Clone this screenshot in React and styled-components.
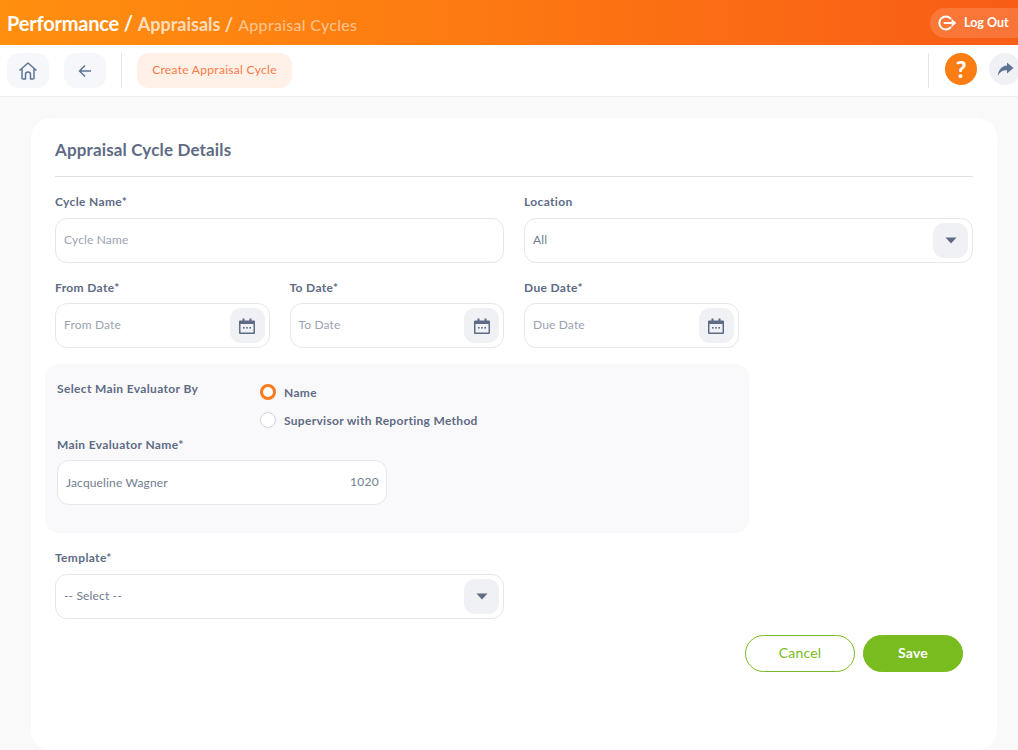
import React from 'react'
import styled, { createGlobalStyle } from 'styled-components'

const Global = createGlobalStyle`
html, body { margin: 0; padding: 0; height: 750px; overflow: hidden; background: #f9f9f9; }
* { box-sizing: border-box; }
body { font-family: 'Lato', 'Open Sans', sans-serif; color: #5e6b85; }
`

const Page = styled.div`
width: 1018px;
height: 750px;
overflow: hidden;
display: flex;
flex-direction: column;
`

const Header = styled.header`
height: 45px;
flex: none;
display: flex;
align-items: center;
justify-content: space-between;
padding-left: 7px;
background: linear-gradient(90deg, #ff8f0f 0%, #fd7a12 45%, #f85c16 100%);
`

const Crumbs = styled.div`
display: flex;
align-items: baseline;
font-weight: 700;
white-space: nowrap;
`

const Crumb = styled.span`
font-size: ${p => p.$size}px;
font-weight: ${p => p.$weight || 700};
letter-spacing: ${p => p.$track || 0}px;
color: rgba(255, 255, 255, ${p => p.$alpha});
margin-right: ${p => p.$gap}px;
`

const LogOut = styled.button`
width: 88px;
height: 30px;
border: none;
border-radius: 15px 0 0 15px;
background: rgba(255, 255, 255, 0.15);
color: #fff;
font: 700 12.5px 'Lato', sans-serif;
display: flex;
align-items: center;
gap: 7px;
padding: 0 0 0 7px;
white-space: nowrap;
`

const Toolbar = styled.div`
height: 52px;
flex: none;
background: #fff;
border-bottom: 1px solid #eeeef0;
display: flex;
align-items: flex-start;
padding: 8px 0 0 7px;
overflow: hidden;
`

const ToolButton = styled.button`
width: 42px;
height: 35px;
border: none;
border-radius: 12px;
background: #f5f7fa;
margin-right: 15px;
padding: 0;
display: flex;
align-items: center;
justify-content: center;
color: #5e7596;
`

const Divider = styled.div`
width: 1px;
height: 35px;
background: #e6e6ea;
margin-right: ${p => p.$gap}px;
`

const CreateTab = styled.div`
width: 155px;
height: 35px;
border-radius: 12px;
background: #fff0e8;
color: #fb7a45;
font-size: 12px;
letter-spacing: 0.3px;
padding-bottom: 2px;
display: flex;
align-items: center;
justify-content: center;
`

const RightTools = styled.div`
margin-left: auto;
display: flex;
margin-right: -3px;
`

const Circle = styled.div`
width: 32px;
height: 32px;
border-radius: 50%;
flex: none;
display: flex;
align-items: center;
justify-content: center;
background: ${p => p.$bg};
color: #fff;
font-size: 23px;
font-weight: 900;
margin-right: ${p => p.$gap || 0}px;
`

const Main = styled.main`
flex: 1;
padding: 21px 21px 0 31px;
`

const Card = styled.section`
background: #fff;
border-radius: 20px;
height: 632px;
padding: 20px 24px;
`

const Title = styled.h2`
margin: 0;
height: 39px;
padding-top: 1px;
border-bottom: 1px solid #dfe0e6;
font-size: 17px;
font-weight: 700;
letter-spacing: 0.15px;
line-height: 22px;
color: #5e6b85;
`

const Grid = styled.div`
display: grid;
grid-template-columns: repeat(4, 1fr);
column-gap: 20px;
margin-top: ${p => p.$top || 0}px;
`

const Field = styled.div`
grid-column: span ${p => p.$span || 1};
margin-top: ${p => p.$top || 0}px;
`

const Label = styled.div`
font-size: 12px;
font-weight: 700;
letter-spacing: 0.35px;
line-height: 16px;
height: 16px;
margin-bottom: ${p => p.$gap ?? 8}px;
color: #5e6b85;
`

const Box = styled.div`
height: 45px;
border: 1px solid #e6e6ec;
border-radius: 12px;
background: #fff;
display: flex;
align-items: center;
justify-content: space-between;
padding: 0 4px 2px 8px;
font-size: 12px;
letter-spacing: 0.15px;
color: ${p => (p.$filled ? '#727d91' : '#9aa3b2')};
`

const AddOn = styled.span`
width: 35px;
height: 35px;
margin-top: 2px;
border-radius: 11px;
background: #f0f1f5;
display: flex;
align-items: center;
justify-content: center;
color: #5e6b85;
`

const Panel = styled.div`
width: 704px;
height: 169px;
margin: 16px 0 0 -10px;
padding: 17px 12px 0;
background: #f9f9fb;
border-radius: 14px;
`

const PanelTop = styled.div`
display: flex;
height: 56px;
`

const PanelLabel = styled.div`
width: 203px;
font-size: 12px;
font-weight: 700;
letter-spacing: 0.35px;
line-height: 16px;
color: #5e6b85;
`

const Radios = styled.div`
display: flex;
flex-direction: column;
gap: 12px;
padding-top: 3px;
`

const RadioRow = styled.div`
display: flex;
align-items: center;
gap: 8px;
height: 16px;
font-size: 12px;
font-weight: 700;
letter-spacing: 0.3px;
color: #5e6b85;
`

const Radio = styled.span`
width: 16px;
height: 16px;
border-radius: 50%;
background: #fff;
border: ${p => (p.$on ? '3.5px solid #fb7a1c' : '1px solid #cfd2de')};
`

const NameBox = styled(Box)`
width: 330px;
padding: 0 7px 0 8px;
`

const Code = styled.span`
font-size: 12px;
letter-spacing: 0.3px;
padding-bottom: 2px;
`

const Actions = styled.div`
display: flex;
justify-content: flex-end;
gap: 8px;
margin: 16px 10px 0 0;
`

const ActionButton = styled.button`
width: ${p => p.$w}px;
height: 37px;
border-radius: 19px;
border: 1px solid #78bc20;
background: ${p => (p.$primary ? '#78bc20' : '#fff')};
color: ${p => (p.$primary ? '#fff' : '#78bc20')};
font: ${p => (p.$primary ? 700 : 400)} 14px 'Lato', sans-serif;
letter-spacing: 0.15px;
padding: 0 0 2px;
`

const Caret = () => (
  <svg width="12" height="7" viewBox="0 0 12 7"><path d="M0.5 0.5h11L6 6.5z" fill="currentColor" /></svg>
)

const CalendarIcon = () => (
  <svg width="18" height="18" viewBox="0 0 18 18">
    <path d="M2 3.5h14a1 1 0 0 1 1 1V16a1 1 0 0 1-1 1H2a1 1 0 0 1-1-1V4.5a1 1 0 0 1 1-1z" fill="#5e6b85" />
    <rect x="2.5" y="7" width="13" height="8.5" fill="#f0f1f5" />
    <rect x="4.5" y="1.5" width="2" height="3" fill="#5e6b85" />
    <rect x="11.5" y="1.5" width="2" height="3" fill="#5e6b85" />
    <rect x="5" y="10" width="1.6" height="1.6" fill="#5e6b85" />
    <rect x="8.2" y="10" width="1.6" height="1.6" fill="#5e6b85" />
    <rect x="11.4" y="10" width="1.6" height="1.6" fill="#5e6b85" />
  </svg>
)

const HomeIcon = () => (
  <svg width="20" height="20" viewBox="0 0 20 20" fill="none" stroke="currentColor" strokeWidth="1.5" strokeLinejoin="round">
    <path d="M1.5 9.5L10 2l8.5 7.5M4 8v9a1 1 0 0 0 1 1h2.5v-4.5a2.5 2.5 0 0 1 5 0V18H15a1 1 0 0 0 1-1V8" />
  </svg>
)

const BackIcon = () => (
  <svg width="14" height="14" viewBox="0 0 14 14" fill="none" stroke="currentColor" strokeWidth="1.5">
    <path d="M13 7H1.5M7 1.5L1.5 7 7 12.5" />
  </svg>
)

const LogOutIcon = () => (
  <svg width="20" height="16" viewBox="0 0 20 16" fill="none" stroke="#fff" strokeWidth="2" strokeLinecap="round">
    <path d="M13.5 3.5A6.5 6.5 0 1 0 13.5 12.5" />
    <path d="M7.5 8h8" />
    <path d="M15 4.5L19 8l-4 3.5z" fill="#fff" strokeWidth="0.5" strokeLinejoin="round" />
  </svg>
)

const ShareIcon = () => (
  <svg width="17" height="15" viewBox="0 0 17 15">
    <path d="M10 0.5L16.5 6 10 11.5V8.3C6 8.3 3 9.5 0.8 14 1.2 8 4.5 3.8 10 3.4z" fill="#5e7596" />
  </svg>
)

const DateField = ({ label }) => (
  <Field>
    <Label $gap={7}>{label}*</Label>
    <Box>
      {label}
      <AddOn><CalendarIcon /></AddOn>
    </Box>
  </Field>
)

const App = () => (
  <Page>
    <Global />
    <Header>
      <Crumbs>
        <Crumb $size={20} $alpha={1} $track={-0.2} $gap={5}>Performance /</Crumb>
        <Crumb $size={18} $alpha={0.72} $gap={5}>Appraisals /</Crumb>
        <Crumb $size={16} $weight={400} $alpha={0.55} $track={0.3} $gap={0}>Appraisal Cycles</Crumb>
      </Crumbs>
      <LogOut><LogOutIcon />Log Out</LogOut>
    </Header>
    <Toolbar>
      <ToolButton aria-label="Home"><HomeIcon /></ToolButton>
      <ToolButton aria-label="Back"><BackIcon /></ToolButton>
      <Divider $gap={15} />
      <CreateTab>Create Appraisal Cycle</CreateTab>
      <RightTools>
        <Divider $gap={16} />
        <Circle $bg="#fb7d14" $gap={12}>?</Circle>
        <Circle $bg="#f0f1f5"><ShareIcon /></Circle>
      </RightTools>
    </Toolbar>
    <Main>
      <Card>
        <Title>Appraisal Cycle Details</Title>
        <Grid>
          <Field $span={2} $top={17}>
            <Label>Cycle Name*</Label>
            <Box>Cycle Name</Box>
          </Field>
          <Field $span={2} $top={17}>
            <Label>Location</Label>
            <Box $filled>
              All
              <AddOn><Caret /></AddOn>
            </Box>
          </Field>
        </Grid>
        <Grid $top={17}>
          <DateField label="From Date" />
          <DateField label="To Date" />
          <DateField label="Due Date" />
        </Grid>
        <Panel>
          <PanelTop>
            <PanelLabel>Select Main Evaluator By</PanelLabel>
            <Radios>
              <RadioRow><Radio $on />Name</RadioRow>
              <RadioRow><Radio />Supervisor with Reporting Method</RadioRow>
            </Radios>
          </PanelTop>
          <Label $gap={7}>Main Evaluator Name*</Label>
          <NameBox $filled>
            Jacqueline Wagner
            <Code>1020</Code>
          </NameBox>
        </Panel>
        <Grid>
          <Field $span={2} $top={17}>
            <Label>Template*</Label>
            <Box $filled>
              -- Select --
              <AddOn><Caret /></AddOn>
            </Box>
          </Field>
        </Grid>
        <Actions>
          <ActionButton $w={110}>Cancel</ActionButton>
          <ActionButton $w={100} $primary>Save</ActionButton>
        </Actions>
      </Card>
    </Main>
  </Page>
)

export default App
